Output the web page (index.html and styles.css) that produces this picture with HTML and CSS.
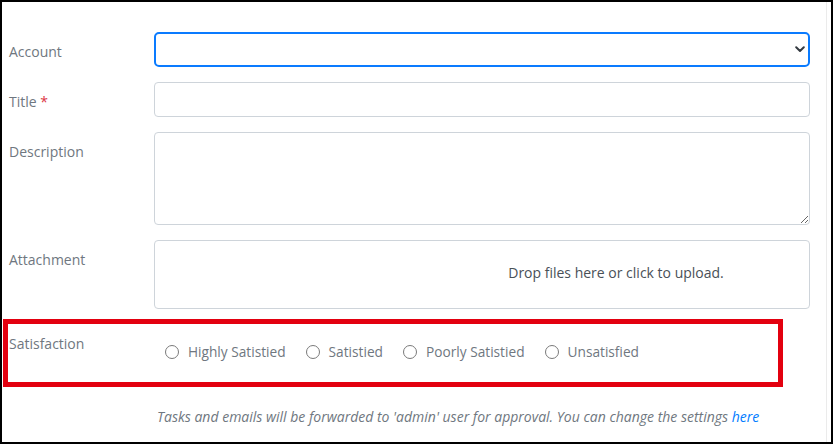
FILE: index.html
```html
<!DOCTYPE html>
<html lang="en">
<head>
<meta charset="utf-8">
<title>Form</title>
<link rel="stylesheet" href="styles.css">
</head>
<body>
<div class="frame">
  <div class="main">
    <form class="form">
      <label class="label" for="account">Account</label>
      <div class="select-wrap">
        <select id="account" class="select"><option></option></select>
        <svg class="chev" width="10" height="7" viewBox="0 0 10 7"><path d="M1.2 1.3 L5 5 L8.8 1.3" fill="none" stroke="#343a40" stroke-width="2" stroke-linecap="round" stroke-linejoin="round"/></svg>
      </div>

      <label class="label" for="title">Title <span class="req">*</span></label>
      <input id="title" class="input" type="text">

      <label class="label" for="desc">Description</label>
      <textarea id="desc" class="textarea"></textarea>

      <div class="label">Attachment</div>
      <div class="dropzone">Drop files here or click to upload.</div>

      <div class="label">Satisfaction</div>
      <div class="radios">
        <label class="radio"><span class="circle"></span>Highly Satistied</label>
        <label class="radio"><span class="circle"></span>Satistied</label>
        <label class="radio"><span class="circle"></span>Poorly Satistied</label>
        <label class="radio"><span class="circle"></span>Unsatisfied</label>
      </div>

      <p class="note">Tasks and emails will be forwarded to 'admin' user for approval. You can change the settings <a class="link" href="#">here</a></p>
    </form>
  </div>
  <div class="highlight"></div>
</div>
</body>
</html>
```

FILE: styles.css
```css
* { box-sizing: border-box; }
html, body { margin: 0; padding: 0; background: #fff; }
body { font-family: "Open Sans", "Noto Sans", sans-serif; font-size: 14px; color: #6c757d; }

.frame {
  position: relative;
  width: 833px;
  height: 444px;
  border: 2px solid #000;
  padding-right: 4px;
  display: flex;
  overflow: hidden;
}
.main {
  flex: 1;
  border-right: 1px solid #ebebeb;
  padding: 30px 16px 0 7px;
}
.form {
  display: grid;
  grid-template-columns: 145px 656px;
  row-gap: 15px;
  margin: 0;
}
.label {
  padding-top: 10px;
  line-height: 20px;
  color: #6f7780;
}
.req { color: #dc3545; }

.select-wrap { position: relative; height: 35px; }
.select {
  appearance: none;
  -webkit-appearance: none;
  width: 100%;
  height: 100%;
  border: 2px solid #0a7bff;
  border-radius: 5px;
  background: #fff;
  outline: none;
  font: inherit;
}
.chev { position: absolute; right: 5px; top: 14px; }

.input {
  height: 35px;
  border: 1px solid #ced4da;
  border-radius: 4px;
  font: inherit;
  outline: none;
}
.textarea {
  height: 93px;
  border: 1px solid #ced4da;
  border-radius: 4px;
  font: inherit;
  resize: vertical;
  outline: none;
}
.dropzone {
  height: 69px;
  border: 1px solid #ced4da;
  border-radius: 4px;
  display: flex;
  align-items: center;
  justify-content: center;
  padding: 0 0 5px 268px;
  color: #495057;
}

.radios {
  display: flex;
  gap: 20px;
  padding: 18px 0 0 11px;
  line-height: 20px;
  font-size: 13.7px;
}
.radio {
  display: flex;
  align-items: center;
  gap: 9px;
  color: #6f7780;
}
.circle {
  flex: none;
  width: 14px;
  height: 14px;
  border: 1px solid #7a7a7a;
  border-radius: 50%;
  background: #fff;
}

.note {
  grid-column: 2;
  margin: 30px 0 0 3px;
  font-style: italic;
  font-size: 14px;
  line-height: 20px;
  color: #6f7780;
}
.link { color: #007bff; text-decoration: none; }

.highlight {
  position: absolute;
  left: 1px;
  top: 317px;
  width: 780px;
  height: 68px;
  border: 5px solid #e3000f;
  pointer-events: none;
}
```
